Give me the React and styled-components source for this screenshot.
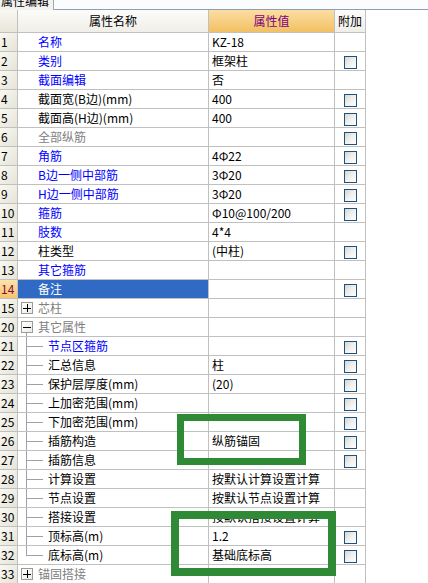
import React from "react";
import styled, { createGlobalStyle, css } from "styled-components";

const GlobalStyle = createGlobalStyle`
  html, body { margin: 0; padding: 0; background: #ffffff; }
  body { font-family: "Noto Sans CJK SC", "Liberation Sans", sans-serif; font-size: 12px; }
  * { box-sizing: border-box; }
`;

const COLS = "18px 191px 126px 31px";
const LINE = "#c0c0c0";

const Page = styled.div`
  position: relative;
  width: 428px;
  height: 583px;
  overflow: hidden;
  background: #fff;
`;

const TabStrip = styled.div`
  display: flex;
  height: 10px;
`;

const Tab = styled.div`
  width: 54px;
  height: 10px;
  overflow: hidden;
  background: #f2f2f0;
  border-right: 1px solid #a8a8a8;
  color: #000;
  font-size: 12px;
  line-height: 12px;
  padding-left: 1px;
  & > span { display: block; margin-top: -5px; white-space: nowrap; }
`;

const TabRest = styled.div`
  flex: 1;
  background: #fbfcfe;
  border-bottom: 1px solid #8e9db3;
`;

const Table = styled.div`
  width: 366px;
  display: flex;
  flex-direction: column;
`;

const HeaderRow = styled.div`
  display: grid;
  grid-template-columns: ${COLS};
  height: 23px;
  border-bottom: 1px solid ${LINE};
`;

const headerBg = {
  plain: "linear-gradient(to bottom, #fcfcfa, #efeee8)",
  num: "linear-gradient(to bottom, #f8f7f2, #e8e6da)",
  accent: "linear-gradient(to bottom, #fbdea2, #f2c062)",
};

const HeaderCell = styled.div`
  display: flex;
  align-items: center;
  justify-content: center;
  border-right: 1px solid ${LINE};
  background: ${(p) => headerBg[p.$variant || "plain"]};
  color: ${(p) => (p.$variant === "accent" ? "#800080" : "#000")};
  font-size: 12px;
  line-height: 22px;
  white-space: nowrap;
`;

const Row = styled.div`
  display: grid;
  grid-template-columns: ${COLS};
  height: 19px;
  border-bottom: 1px solid ${LINE};
`;

const NumCell = styled.div`
  border-right: 1px solid ${LINE};
  padding-left: 1px;
  line-height: 18px;
  font-size: 12px;
  color: ${(p) => (p.$active ? "#8a0a3a" : "#000")};
  background: ${(p) =>
    p.$active
      ? "linear-gradient(to bottom, #fde3ae, #f6c46c)"
      : "linear-gradient(to bottom right, #f9f8f3, #e6e4d7)"};
`;

const tones = {
  blue: "#0000ff",
  black: "#000000",
  gray: "#808080",
};

const NameCell = styled.div`
  display: flex;
  align-items: center;
  border-right: 1px solid ${LINE};
  white-space: nowrap;
  overflow: hidden;
  line-height: 18px;
  font-size: 12px;
  padding-left: ${(p) => p.$pad}px;
  color: ${(p) => (p.$selected ? "#ffffff" : tones[p.$tone])};
  background: ${(p) => (p.$selected ? "#316ac5" : "#ffffff")};
`;

const ValueCell = styled.div`
  border-right: 1px solid ${LINE};
  padding-left: 3px;
  line-height: 18px;
  font-size: 12px;
  color: #000;
  white-space: nowrap;
  overflow: hidden;
`;

const AddCell = styled.div`
  border-right: 1px solid ${LINE};
  padding: 4px 0 0 9px;
`;

const Checkbox = styled.div`
  width: 13px;
  height: 13px;
  border: 1px solid #1c5180;
  background: linear-gradient(135deg, #d6d6cf 0%, #eeeeea 45%, #ffffff 100%);
`;

const ExpandBox = styled.div`
  position: relative;
  flex: none;
  width: 12px;
  height: 12px;
  margin-right: 5px;
  border: 1px solid #9a9a9a;
  background: linear-gradient(135deg, #ffffff, #ecece6);
  display: flex;
  align-items: center;
  justify-content: center;
  color: #000;
  font-family: "DejaVu Sans", sans-serif;
  font-size: 11px;
  line-height: 10px;
  ${(p) =>
    p.$tail &&
    css`
      &::after {
        content: "";
        position: absolute;
        left: 4px;
        top: 11px;
        width: 1px;
        height: 4px;
        background: #a0a0a0;
      }
    `}
`;

const Connector = styled.svg`
  flex: none;
  width: 26px;
  height: 18px;
  margin-right: 4px;
`;

const Highlight = styled.div`
  position: absolute;
  left: ${(p) => p.$x}px;
  top: ${(p) => p.$y}px;
  width: ${(p) => p.$w}px;
  height: ${(p) => p.$h}px;
  border: ${(p) => p.$t}px solid #2f8a36;
  pointer-events: none;
`;

const Sign = () => (
  <svg width="8" height="8" viewBox="0 0 8 8">
    <path d="M0 4H8" stroke="#000" strokeWidth="1" shapeRendering="crispEdges" />
  </svg>
);
const Plus = () => (
  <svg width="8" height="8" viewBox="0 0 8 8">
    <path d="M0 4H8M4 0V8" stroke="#000" strokeWidth="1" shapeRendering="crispEdges" />
  </svg>
);

const TreeConnector = ({ last }) => (
  <Connector viewBox="0 0 26 18">
    <path
      d={last ? "M8.5 0V9.5H25" : "M8.5 0V18M8.5 9.5H25"}
      stroke="#a0a0a0"
      strokeWidth="1"
      fill="none"
      shapeRendering="crispEdges"
    />
  </Connector>
);

const RB = "Φ";

const rows = [
  { no: 1, name: "名称", tone: "blue", value: "KZ-18" },
  { no: 2, name: "类别", tone: "blue", value: "框架柱", cb: true },
  { no: 3, name: "截面编辑", tone: "blue", value: "否" },
  { no: 4, name: "截面宽(B边)(mm)", tone: "black", value: "400", cb: true },
  { no: 5, name: "截面高(H边)(mm)", tone: "black", value: "400", cb: true },
  { no: 6, name: "全部纵筋", tone: "gray", value: "", cb: true },
  { no: 7, name: "角筋", tone: "blue", value: `4${RB}22`, cb: true },
  { no: 8, name: "B边一侧中部筋", tone: "blue", value: `3${RB}20`, cb: true },
  { no: 9, name: "H边一侧中部筋", tone: "blue", value: `3${RB}20`, cb: true },
  { no: 10, name: "箍筋", tone: "blue", value: `${RB}10@100/200`, cb: true },
  { no: 11, name: "肢数", tone: "blue", value: "4*4" },
  { no: 12, name: "柱类型", tone: "black", value: "(中柱)", cb: true },
  { no: 13, name: "其它箍筋", tone: "blue", value: "" },
  { no: 14, name: "备注", tone: "black", value: "", cb: true, selected: true },
  { no: 15, name: "芯柱", tone: "gray", value: "", kind: "expand" },
  { no: 20, name: "其它属性", tone: "gray", value: "", kind: "collapse" },
  { no: 21, name: "节点区箍筋", tone: "blue", value: "", cb: true, kind: "child" },
  { no: 22, name: "汇总信息", tone: "black", value: "柱", cb: true, kind: "child" },
  { no: 23, name: "保护层厚度(mm)", tone: "black", value: "(20)", cb: true, kind: "child" },
  { no: 24, name: "上加密范围(mm)", tone: "black", value: "", cb: true, kind: "child" },
  { no: 25, name: "下加密范围(mm)", tone: "black", value: "", cb: true, kind: "child" },
  { no: 26, name: "插筋构造", tone: "black", value: "纵筋锚固", cb: true, kind: "child" },
  { no: 27, name: "插筋信息", tone: "black", value: "", cb: true, kind: "child" },
  { no: 28, name: "计算设置", tone: "black", value: "按默认计算设置计算", kind: "child" },
  { no: 29, name: "节点设置", tone: "black", value: "按默认节点设置计算", kind: "child" },
  { no: 30, name: "搭接设置", tone: "black", value: "按默认搭接设置计算", kind: "child" },
  { no: 31, name: "顶标高(m)", tone: "black", value: "1.2", cb: true, kind: "child" },
  { no: 32, name: "底标高(m)", tone: "black", value: "基础底标高", cb: true, kind: "last" },
  { no: 33, name: "锚固搭接", tone: "gray", value: "", kind: "expand" },
];

const padFor = (kind) => {
  if (kind === "expand" || kind === "collapse") return 3;
  if (kind === "child" || kind === "last") return 0;
  return 20;
};

const DataRow = ({ r }) => (
  <Row>
    <NumCell $active={r.selected}>{r.no}</NumCell>
    <NameCell $pad={padFor(r.kind)} $tone={r.tone} $selected={r.selected}>
      {r.kind === "expand" && (
        <ExpandBox>
          <Plus />
        </ExpandBox>
      )}
      {r.kind === "collapse" && (
        <ExpandBox $tail>
          <Sign />
        </ExpandBox>
      )}
      {(r.kind === "child" || r.kind === "last") && <TreeConnector last={r.kind === "last"} />}
      <span>{r.name}</span>
    </NameCell>
    <ValueCell>{r.value}</ValueCell>
    <AddCell>{r.cb && <Checkbox />}</AddCell>
  </Row>
);

export default function App() {
  return (
    <Page>
      <GlobalStyle />
      <TabStrip>
        <Tab>
          <span>属性编辑</span>
        </Tab>
        <TabRest />
      </TabStrip>
      <Table>
        <HeaderRow>
          <HeaderCell $variant="num" />
          <HeaderCell>属性名称</HeaderCell>
          <HeaderCell $variant="accent">属性值</HeaderCell>
          <HeaderCell>附加</HeaderCell>
        </HeaderRow>
        {rows.map((r) => (
          <DataRow key={r.no} r={r} />
        ))}
      </Table>
      <Highlight $x={177} $y={414} $w={129} $h={51} $t={7} />
      <Highlight $x={171} $y={511} $w={165} $h={65} $t={8} />
    </Page>
  );
}
